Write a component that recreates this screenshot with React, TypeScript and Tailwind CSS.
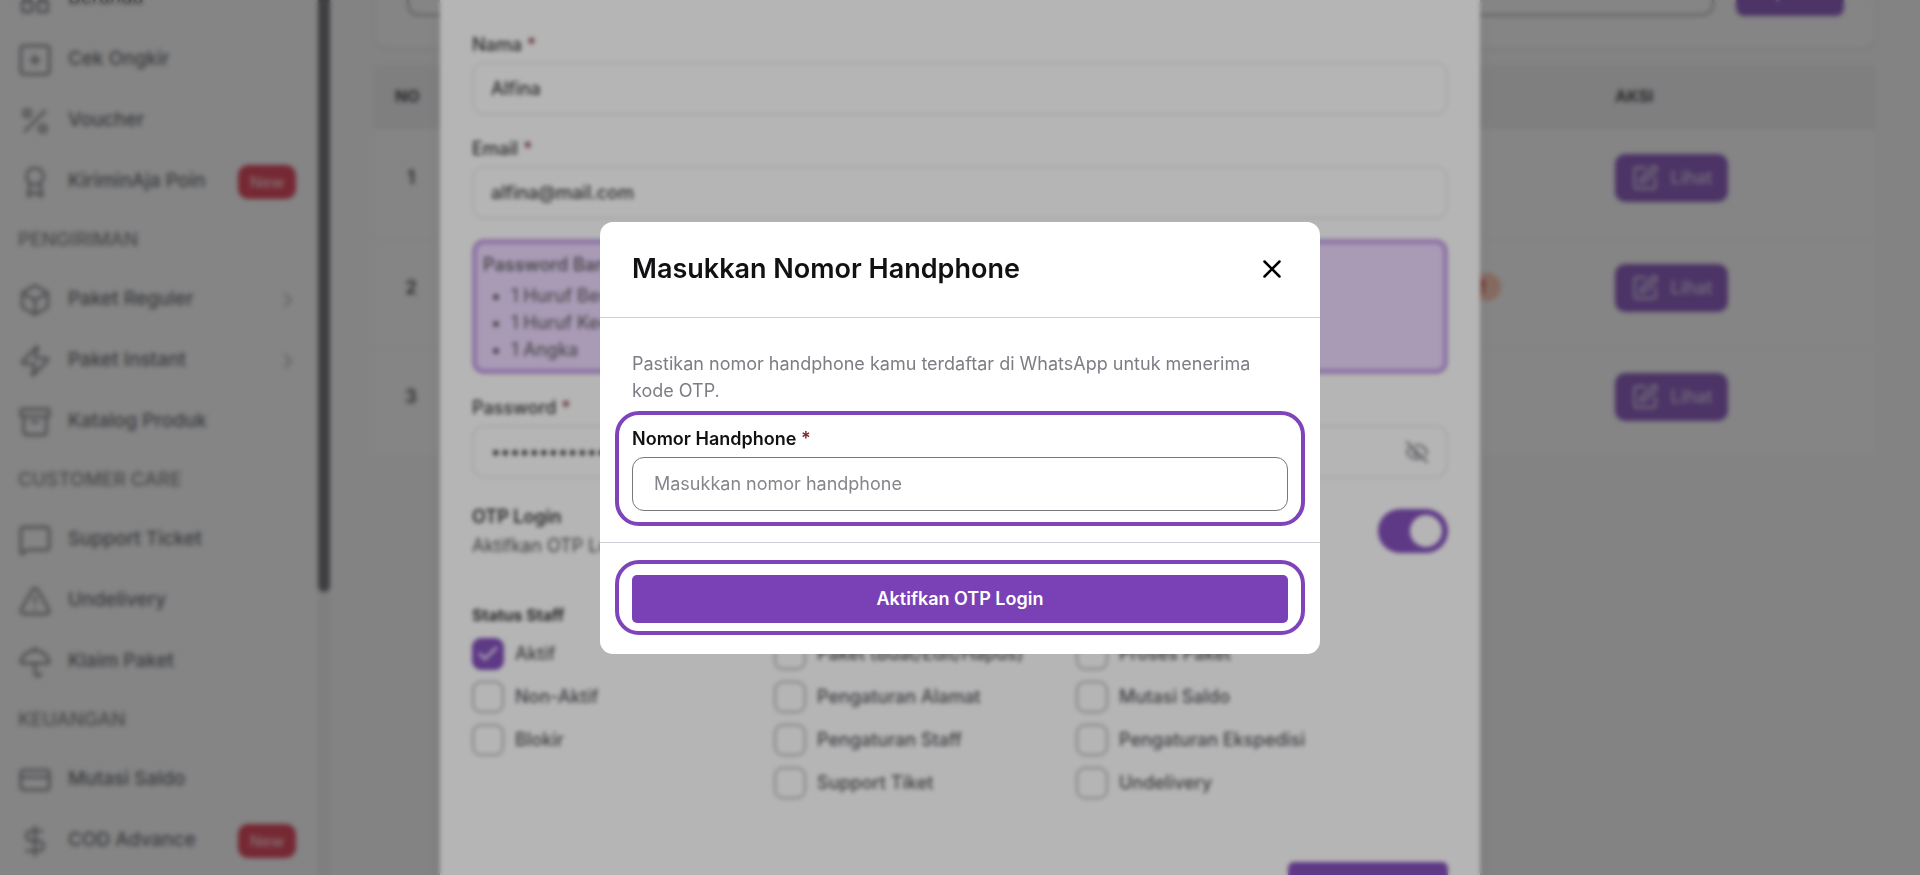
import React, { useState } from 'react';
import {
  Archive,
  Award,
  Box,
  Check,
  ChevronDown,
  ChevronRight,
  CreditCard,
  DollarSign,
  EyeOff,
  LayoutGrid,
  MessageSquare,
  Percent,
  Search,
  SquarePen,
  TriangleAlert,
  Umbrella,
  X,
  Zap,
} from 'lucide-react';
import type { LucideIcon } from 'lucide-react';

interface MenuItem {
  label: string;
  icon: LucideIcon | typeof PlusBox;
  isNew?: boolean;
  hasChildren?: boolean;
}

interface MenuGroup {
  title?: string;
  items: MenuItem[];
}

// Kotak dengan tanda tambah kecil
const PlusBox = ({ className }: { className?: string }) => (
  <svg viewBox="0 0 24 24" fill="none" stroke="currentColor" strokeWidth="2" strokeLinecap="round" className={className}>
    <rect x="2" y="2" width="20" height="20" rx="2" />
    <path d="M12 9v6M9 12h6" />
  </svg>
);

const MENU: MenuGroup[] = [
  {
    items: [
      { label: 'Beranda', icon: LayoutGrid },
      { label: 'Cek Ongkir', icon: PlusBox },
      { label: 'Voucher', icon: Percent },
      { label: 'KiriminAja Poin', icon: Award, isNew: true },
    ],
  },
  {
    title: 'PENGIRIMAN',
    items: [
      { label: 'Paket Reguler', icon: Box, hasChildren: true },
      { label: 'Paket Instant', icon: Zap, hasChildren: true },
      { label: 'Katalog Produk', icon: Archive },
    ],
  },
  {
    title: 'CUSTOMER CARE',
    items: [
      { label: 'Support Ticket', icon: MessageSquare },
      { label: 'Undelivery', icon: TriangleAlert },
      { label: 'Klaim Paket', icon: Umbrella },
    ],
  },
  {
    title: 'KEUANGAN',
    items: [
      { label: 'Mutasi Saldo', icon: CreditCard },
      { label: 'COD Advance', icon: DollarSign, isNew: true },
    ],
  },
];

const STATUS = ['Aktif', 'Non-Aktif', 'Blokir'];
const ACCESS_LEFT = ['Paket (Buat/Edit/Hapus)', 'Pengaturan Alamat', 'Pengaturan Staff', 'Support Tiket'];
const ACCESS_RIGHT = ['Proses Paket', 'Mutasi Saldo', 'Pengaturan Ekspedisi', 'Undelivery'];

const Sidebar = () => (
  <aside className="flex h-full w-[330px] shrink-0 bg-white">
    <nav className="-mt-8 flex-1">
      {MENU.map((group, i) => (
        <div key={i}>
          {group.title && (
            <h2 className="flex h-[57px] items-center pl-[18px] text-[19px] font-medium text-[#77777f]">{group.title}</h2>
          )}
          {group.items.map(({ label, icon: Icon, isNew, hasChildren }) => (
            <a key={label} href="#" className="flex h-[61px] items-center pr-[22px] pl-[18px] text-[19px] font-medium text-[#50525c]">
              <Icon className="mr-4 size-[34px] text-[#80808a]" strokeWidth={2} />
              {label}
              {isNew && (
                <span className="ml-auto flex h-[34px] w-[58px] items-center justify-center rounded-[10px] bg-[#dc2640] text-base text-[#ffc9d0]">
                  New
                </span>
              )}
              {hasChildren && <ChevronRight className="mr-[-4px] ml-auto size-6 text-[#b0b0b8]" />}
            </a>
          ))}
        </div>
      ))}
    </nav>
    <div className="w-3 bg-[#f1f1f3]">
      <div className="h-[592px] rounded-b-full bg-[#5a5b62]" />
    </div>
  </aside>
);

const StaffPage = () => (
  <main className="flex-1 overflow-hidden bg-[#fafafa] px-[45px]">
    <section className="-mt-8 flex h-20 items-start gap-[22px] rounded-xl bg-white pr-[31px] pl-8 shadow-sm">
      <div className="flex h-12 flex-1 items-end justify-end rounded-xl border-2 border-[#a5a5ae] px-3">
        <ChevronDown className="mb-3 size-6 text-[#85858f]" />
      </div>
      <button type="button" className="flex h-12 w-[108px] items-center justify-center gap-2 rounded-lg bg-[#7a41b7] text-lg text-[#d5c6e8]">
        <Search className="size-6" />
        Cari
      </button>
    </section>
    <table className="mt-[18px] w-full bg-white text-left">
      <thead>
        <tr className="h-[63px] bg-[#f1f1f4] text-base font-bold text-[#2a2a2f]">
          <th className="w-[72px] pb-1 pl-5">NO</th>
          <th />
          <th className="w-[260px] pb-1">AKSI</th>
        </tr>
      </thead>
      <tbody>
        {[1, 2, 3].map((no) => (
          <tr key={no} className="h-[109px] border-b border-[#f3f3f5] align-top text-lg font-semibold text-[#2a2a30]">
            <td className="pt-[35px] text-center">{no}</td>
            <td className="pt-[34px]">
              {no === 2 && (
                <span className="mr-[114px] ml-auto flex size-7 items-center justify-center rounded-full bg-[#ffc2a8] pr-2 text-lg font-bold text-[#c81e2e]">
                  !
                </span>
              )}
            </td>
            <td className="pt-[25px]">
              <button type="button" className="flex h-12 w-[113px] items-center justify-center gap-3 rounded-[10px] bg-[#7a41b7] text-lg font-medium text-[#d5c6e8]">
                <SquarePen className="size-7" />
                Lihat
              </button>
            </td>
          </tr>
        ))}
      </tbody>
    </table>
  </main>
);

interface TextFieldProps {
  id: string;
  label: string;
  value: string;
  type?: string;
  children?: React.ReactNode;
}

const TextField: React.FC<TextFieldProps> = ({ id, label, value, type = 'text', children }) => (
  <div className="mb-5 pt-[2px]">
    <label htmlFor={id} className="block h-[29px] text-lg leading-6 font-medium text-[#26262b]">
      {label} <span className="text-[#7c2631]">*</span>
    </label>
    <div className="flex h-[53px] items-center rounded-xl border-2 border-[#e8ebf3] px-[17px]">
      <input id={id} type={type} defaultValue={value} className="min-w-0 flex-1 bg-transparent text-lg font-medium text-[#2a2a30] outline-none" />
      {children}
    </div>
  </div>
);

const CheckItem = ({ label, checked = false }: { label: string; checked?: boolean }) => (
  <label className="flex h-[43px] items-center gap-[11px] text-lg font-medium text-[#45454c]">
    <span className="grid">
      <input
        type="checkbox"
        defaultChecked={checked}
        className="peer col-start-1 row-start-1 size-8 appearance-none rounded-[9px] border-2 border-[#b3b3ba] checked:border-[#7a41b7] checked:bg-[#7a41b7]"
      />
      <Check className="pointer-events-none invisible col-start-1 row-start-1 m-auto size-6 text-[#e3d3f2] peer-checked:visible" strokeWidth={3} />
    </span>
    {label}
  </label>
);

const StaffForm = () => (
  <form className="mx-auto h-full w-[1040px] max-w-full overflow-hidden bg-white px-8 pt-[31px] shadow-lg">
    <TextField id="nama" label="Nama" value="Alfina" />
    <TextField id="email" label="Email" value="alfina@mail.com" />

    <div className="mb-5 rounded-xl border-[5px] border-[#c29be6] bg-[#edd6ff] px-[6px] pt-[7px] pb-[6px] text-lg text-[#5c5c62]">
      <p className="h-[31px] font-semibold">Password Baru Minimal</p>
      <ul className="ml-7 list-disc leading-[27px] font-medium">
        <li>1 Huruf Besar</li>
        <li>1 Huruf Kecil</li>
        <li>1 Angka</li>
      </ul>
    </div>

    <TextField id="password" label="Password" value="rahasia12345" type="password">
      <EyeOff className="size-6 text-[#77777f]" />
    </TextField>

    <div className="mb-[22px] flex items-start justify-between border-b border-[#f5f5f7] pt-1 pb-5">
      <div className="text-lg leading-[29px] text-[#45454c]">
        <p className="font-semibold text-[#26262b]">OTP Login</p>
        <p>Aktifkan OTP Login untuk staff</p>
      </div>
      <label className="mt-[7px] flex">
        <span className="sr-only">OTP Login</span>
        <input
          type="checkbox"
          role="switch"
          defaultChecked
          className="h-11 w-[70px] appearance-none rounded-full bg-[#7a41b7] p-[6px] before:ml-auto before:block before:size-8 before:rounded-full before:bg-white"
        />
      </label>
    </div>

    <div className="flex">
      <div className="w-[302px]">
        <h3 className="h-[29px] text-base font-bold text-[#26262b]">Status Staff</h3>
        {STATUS.map((label) => (
          <CheckItem key={label} label={label} checked={label === 'Aktif'} />
        ))}
      </div>
      {[ACCESS_LEFT, ACCESS_RIGHT].map((labels, i) => (
        <div key={i} className="w-[302px] pt-[29px]">
          {labels.map((label) => (
            <CheckItem key={label} label={label} />
          ))}
        </div>
      ))}
    </div>

    <button type="button" className="mt-[58px] ml-auto block h-12 w-40 rounded-md bg-[#7a41b7] text-lg text-white">
      <span className="sr-only">Simpan</span>
    </button>
  </form>
);

const PhoneDialog = () => {
  const [phone, setPhone] = useState('');

  return (
    <div role="dialog" aria-labelledby="dialog-title" className="w-[720px] max-w-full rounded-[13px] bg-white">
      <header className="flex h-24 items-center justify-between border-b border-[#d2cddb] pr-[33px] pl-8">
        <h1 id="dialog-title" className="text-[27px] font-semibold text-[#111113]">
          Masukkan Nomor Handphone
        </h1>
        <button type="button" aria-label="Tutup">
          <X className="size-[30px] text-black" strokeWidth={2} />
        </button>
      </header>

      <div className="px-[15px] pt-8 pb-4">
        <p className="mb-[7px] px-[17px] text-lg leading-[27px] text-[#7d7d84]">
          Pastikan nomor handphone kamu terdaftar di WhatsApp untuk menerima kode OTP.
        </p>
        <div className="rounded-[24px] border-4 border-[#7f44b9] px-[13px] pt-3 pb-[11px]">
          <label htmlFor="phone" className="block text-lg leading-6 font-semibold text-[#111113]">
            Nomor Handphone <span className="text-[#7c2631]">*</span>
          </label>
          <input
            id="phone"
            type="tel"
            value={phone}
            onChange={(e) => setPhone(e.target.value)}
            placeholder="Masukkan nomor handphone"
            className="mt-[6px] block h-[54px] w-full rounded-xl border border-[#77777d] px-[21px] text-lg text-[#111113] outline-none placeholder:text-[#85858b]"
          />
        </div>
      </div>

      <footer className="border-t border-[#cfcdd6] px-[15px] pt-[17px] pb-[19px]">
        <div className="rounded-[24px] border-4 border-[#7f44b9] px-[13px] pt-[11px] pb-2">
          <button type="button" className="h-12 w-full rounded-[5px] bg-[#7a41b7] text-lg font-semibold text-white">
            Aktifkan OTP Login
          </button>
        </div>
      </footer>
    </div>
  );
};

export default function App() {
  return (
    <div className="relative h-screen overflow-hidden bg-white font-[Inter,sans-serif]">
      <div className="flex h-full">
        <Sidebar />
        <StaffPage />
      </div>
      <div className="absolute inset-0 bg-[#2b2b2b]/35 backdrop-blur-[1px]">
        <StaffForm />
      </div>
      <div className="absolute inset-0 flex items-center justify-center bg-[#2b2b2b]/35 backdrop-blur-[2px]">
        <PhoneDialog />
      </div>
    </div>
  );
}
